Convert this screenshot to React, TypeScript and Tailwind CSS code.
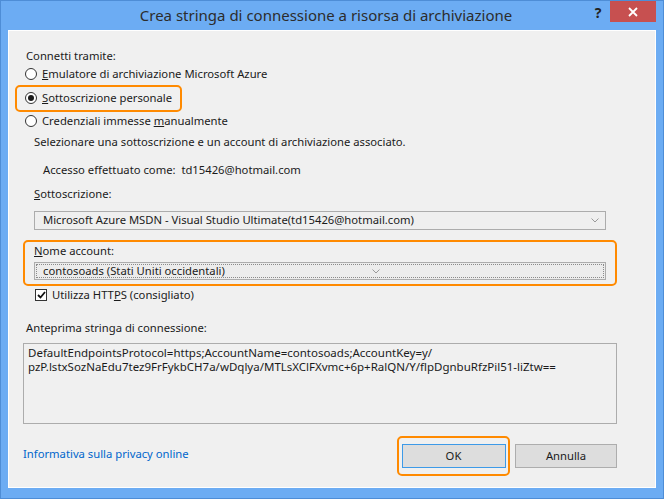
import React from 'react';

const font = { fontFamily: '"Noto Sans", "Open Sans", Arial, sans-serif' };

function Radio({ checked }: { checked?: boolean }) {
  return (
    <span className="w-[12px] h-[12px] rounded-full border border-[#333333] bg-white flex items-center justify-center shrink-0">
      {checked && <span className="w-[6px] h-[6px] rounded-full bg-[#1a1a1a]" />}
    </span>
  );
}

function Chevron() {
  return (
    <svg width="8" height="5" viewBox="0 0 8 5" className="shrink-0">
      <path d="M0.5 0.5 L4 4 L7.5 0.5" fill="none" stroke="#9a9a9a" strokeWidth="1" />
    </svg>
  );
}

export default function App() {
  return (
    <div
      className="w-[664px] h-[499px] bg-[#6cacf3] border border-[#4e8dd6] flex flex-col text-[#1b1b1b] text-[11.25px]"
      style={font}
    >
      {/* barra del titolo */}
      <div className="h-[29px] flex items-start shrink-0">
        <div className="flex-1 h-full flex items-center justify-center pl-[65px] text-[15px] text-[#2c2c2c]">
          Crea stringa di connessione a risorsa di archiviazione
        </div>
        <div className="w-[24px] h-[22px] flex items-center justify-center text-[14px] font-bold text-[#222222]">?</div>
        <div className="w-[46px] h-[21px] bg-[#c75050] flex items-center justify-center mr-[7px]">
          <svg width="10" height="10" viewBox="0 0 10 10">
            <path d="M1 1 L9 9 M9 1 L1 9" stroke="#ffffff" strokeWidth="1.8" />
          </svg>
        </div>
      </div>

      {/* pannello */}
      <div className="mx-[7px] flex-1 mb-[10px] bg-[#f0f0f0] border border-white pt-[16px] pl-[14px] pr-[38px] flex flex-col">
        <div className="h-[18px] flex items-center pl-[3px]">Connetti tramite:</div>

        <div className="h-[18px] flex items-center gap-[5px] pl-[2px]">
          <Radio />
          <span><u>E</u>mulatore di archiviazione Microsoft Azure</span>
        </div>

        <div className="relative mt-[6px] h-[18px] flex items-center gap-[5px] pl-[2px]">
          <Radio checked />
          <span><u>S</u>ottoscrizione personale</span>
          <span className="absolute left-[-8px] top-[-4px] w-[167px] h-[27px] border-[2.5px] border-[#ff8a00] rounded-[5px]" />
        </div>

        <div className="mt-[5px] h-[18px] flex items-center gap-[5px] pl-[2px]">
          <Radio />
          <span>Credenziali immesse <u>m</u>anualmente</span>
        </div>

        <div className="mt-[3px] h-[18px] flex items-center pl-[11px]">
          Selezionare una sottoscrizione e un account di archiviazione associato.
        </div>

        <div className="mt-[10px] h-[18px] flex items-center pl-[20px]">
          Accesso effettuato come:&nbsp; td15426@hotmail.com
        </div>

        <div className="mt-[6px] h-[18px] flex items-center pl-[11px]">
          <span><u>S</u>ottoscrizione:</span>
        </div>

        <div className="mt-[8px] ml-[11px] mr-[11px] h-[19px] border border-[#acacac] bg-[#efefef] flex items-center pl-[8px] pr-[6px]">
          <span className="flex-1">Microsoft Azure MSDN - Visual Studio Ultimate(td15426@hotmail.com)</span>
          <Chevron />
        </div>

        <div className="relative mt-[12px] px-[11px]">
          <div className="h-[18px] flex items-center">
            <span><u>N</u>ome account:</span>
          </div>
          <div className="mt-[2px] h-[18px] border border-[#acacac] bg-[#ececec] p-[1px]">
            <div className="h-full border border-dotted border-[#8a8a8a] flex items-center pl-[6px]">
              <span>contosoads (Stati Uniti occidentali)</span>
              <span className="ml-[147px]"><Chevron /></span>
            </div>
          </div>
          <span className="absolute left-0 right-0 top-[-2px] bottom-[-6px] border-[2.5px] border-[#ff8a00] rounded-[5px]" />
        </div>

        <div className="mt-[6px] h-[18px] flex items-center gap-[5px] pl-[12px]">
          <span className="w-[12px] h-[12px] border border-[#333333] bg-white flex items-center justify-center">
            <svg width="9" height="8" viewBox="0 0 9 8">
              <path d="M1 4 L3.5 6.5 L8 1" fill="none" stroke="#111111" strokeWidth="1.8" />
            </svg>
          </span>
          <span>Utilizza HTT<u>P</u>S (consigliato)</span>
        </div>

        <div className="mt-[15px] h-[18px] flex items-center pl-[3px]">Anteprima stringa di connessione:</div>

        <div className="mt-[6px] h-[81px] border border-[#acacac] bg-[#f0f0f0] px-[4px] pt-[2px] leading-[14px] text-[11.5px]">
          <div>DefaultEndpointsProtocol=https;AccountName=contosoads;AccountKey=y/</div>
          <div>pzP.lstxSozNaEdu7tez9FrFykbCH7a/wDqlya/MTLsXClFXvmc+6p+RalQN/Y/flpDgnbuRfzPil51-liZtw==</div>
        </div>

        <div className="mt-[12px] h-[40px] flex items-center">
          <a className="text-[#0066cc] -mt-[4px]">Informativa sulla privacy online</a>
          <div className="flex-1" />
          <div className="relative w-[113px] h-[40px] flex items-center justify-center">
            <button className="w-[104px] h-[24px] bg-[#dddddd] border border-[#3d9ae8] text-[#1b1b1b]">OK</button>
            <span className="absolute inset-0 border-[2.5px] border-[#ff8a00] rounded-[5px]" />
          </div>
          <button className="ml-[5px] w-[102px] h-[24px] bg-[#dddddd] border border-[#adadad] text-[#1b1b1b]">Annulla</button>
        </div>
      </div>
    </div>
  );
}
